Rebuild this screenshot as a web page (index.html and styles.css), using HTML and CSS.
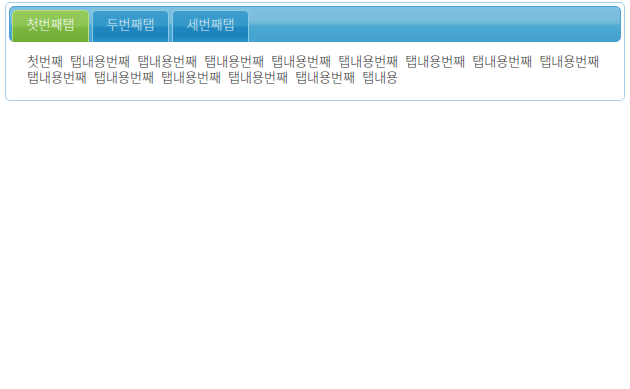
FILE: index.html
```html
<!DOCTYPE html>
<html lang="ko">
<head>
<meta charset="utf-8">
<title>Tabs</title>
<link rel="stylesheet" href="styles.css">
</head>
<body>
<div class="tabs">
  <ul class="tab-nav">
    <li class="tab tab-active"><a href="#tab1">첫번째탭</a></li>
    <li class="tab"><a href="#tab2">두번째탭</a></li>
    <li class="tab"><a href="#tab3">세번째탭</a></li>
  </ul>
  <div class="tab-panel" id="tab1">첫번째 탭내용번째 탭내용번째 탭내용번째 탭내용번째 탭내용번째 탭내용번째 탭내용번째 탭내용번째 탭내용번째 탭내용번째 탭내용번째 탭내용번째 탭내용번째 탭내용</div>
</div>
</body>
</html>
```

FILE: styles.css
```css
html, body {
  margin: 0;
  padding: 0;
  background: #ffffff;
}

body {
  font-family: "Noto Sans CJK KR", "Noto Sans", sans-serif;
  font-size: 13px;
}

.tabs {
  margin: 2px 5px 0 5px;
  padding: 3px;
  border: 1px solid #a9d0e7;
  border-radius: 5px;
  background: #ffffff;
}

.tab-nav {
  list-style: none;
  margin: 0;
  padding: 3px 0 0 2px;
  display: flex;
  gap: 3px;
  border: 1px solid #4aa3d3;
  border-radius: 5px;
  background: linear-gradient(to bottom, #80c2df 0%, #78bdda 40%, #6ab5d6 48%, #4da8d2 56%, #43a2cf 100%);
}

.tab {
  width: 75px;
  margin-bottom: -1px;
  border: 1px solid #8ccae7;
  border-bottom: none;
  border-radius: 5px 5px 0 0;
  background: linear-gradient(to bottom, #3e9dcd 0%, #3398c9 48%, #1f87be 54%, #1c84bb 82%, #2f95c8 100%);
  text-align: center;
}

.tab a {
  display: block;
  padding: 0 0 5px 0;
  line-height: 26px;
  color: #e3f1f9;
  text-decoration: none;
  font-weight: 300;
}

.tab-active {
  border-color: #b9de78;
  background: linear-gradient(to bottom, #96cb5c 0%, #8dc452 48%, #7bb740 54%, #70ae35 100%);
}

.tab-active a {
  color: #ffffff;
}

.tab-panel {
  padding: 11px 18px 12px 18px;
  line-height: 16px;
  color: #2e2e2e;
  word-spacing: 3.6px;
  word-break: keep-all;
  font-weight: 300;
}
```
